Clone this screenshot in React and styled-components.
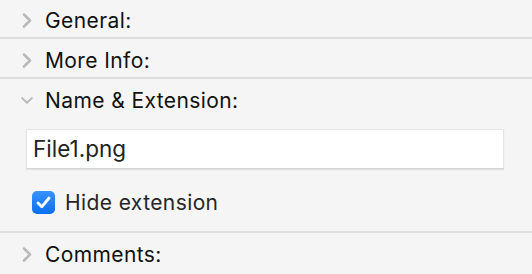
import React, { useState } from "react";
import styled, { createGlobalStyle } from "styled-components";

const GlobalStyle = createGlobalStyle`
  html, body {
    margin: 0;
    padding: 0;
    background: #f5f5f5;
  }
  body {
    font-family: Inter, "Liberation Sans", Arial, sans-serif;
    color: #111;
    -webkit-font-smoothing: antialiased;
  }
`;

const Panel = styled.div`
  width: 532px;
  margin-top: -1px;
  display: flex;
  flex-direction: column;
`;

const Section = styled.section`
  border-bottom: ${(p) => (p.$last ? "none" : "2px solid #dedede")};
`;

const Header = styled.div`
  height: 38px;
  display: flex;
  align-items: center;
  padding: 4px 0 0 21px;
  box-sizing: border-box;
  gap: 12px;
  font-size: 21px;
  letter-spacing: 0.4px;
  cursor: default;
`;

const Chevron = styled.span`
  width: 12px;
  height: 15px;
  display: flex;
  align-items: center;
  justify-content: center;
  svg {
    display: block;
  }
`;

const Body = styled.div`
  padding: 12px 28px 16px 26px;
  display: flex;
  flex-direction: column;
  gap: 21px;
`;

const NameField = styled.input`
  box-sizing: border-box;
  width: 478px;
  height: 40px;
  border: 1px solid #e4e4e4;
  border-bottom-color: #d6d6d6;
  box-shadow: 0 1px 1px rgba(0, 0, 0, 0.08);
  background: #fff;
  padding: 0 0 1px 6px;
  font-family: inherit;
  font-size: 22.5px;
  color: #222;
  outline: none;
`;

const CheckRow = styled.label`
  display: flex;
  align-items: center;
  gap: 10px;
  padding-left: 6px;
  font-size: 21px;
  letter-spacing: 0.4px;
  color: #262626;
`;

const Box = styled.span`
  width: 23px;
  height: 23px;
  border-radius: 5px;
  box-sizing: border-box;
  display: flex;
  align-items: center;
  justify-content: center;
  background: ${(p) =>
    p.$on ? "linear-gradient(#3a93ff, #0a6ff2)" : "#fff"};
  border: ${(p) => (p.$on ? "none" : "1px solid #c8c8c8")};
`;

const ChevronIcon = ({ open }) =>
  open ? (
    <svg width="15" height="9" viewBox="0 0 15 9">
      <path
        d="M1.5 1.5 L7.5 7.2 L13.5 1.5"
        fill="none"
        stroke="#b9b9b9"
        strokeWidth="2.5"
        strokeLinecap="round"
        strokeLinejoin="round"
      />
    </svg>
  ) : (
    <svg width="10" height="15" viewBox="0 0 10 15">
      <path
        d="M2 1.5 L8 7.5 L2 13.5"
        fill="none"
        stroke="#b9b9b9"
        strokeWidth="2.5"
        strokeLinecap="round"
        strokeLinejoin="round"
      />
    </svg>
  );

const Disclosure = ({ title, open, last, children }) => (
  <Section $last={last}>
    <Header>
      <Chevron>
        <ChevronIcon open={open} />
      </Chevron>
      {title}
    </Header>
    {open && children}
  </Section>
);

const App = () => {
  const [name, setName] = useState("File1.png");
  const [hide, setHide] = useState(true);

  return (
    <>
      <GlobalStyle />
      <Panel>
        <Disclosure title="General:" />
        <Disclosure title="More Info:" />
        <Disclosure title="Name & Extension:" open>
          <Body>
            <NameField value={name} onChange={(e) => setName(e.target.value)} />
            <CheckRow onClick={() => setHide(!hide)}>
              <Box $on={hide}>
                {hide && (
                  <svg width="15" height="13" viewBox="0 0 15 13">
                    <path
                      d="M2 7 L5.8 10.8 L13 2"
                      fill="none"
                      stroke="#fff"
                      strokeWidth="2.8"
                      strokeLinecap="round"
                      strokeLinejoin="round"
                    />
                  </svg>
                )}
              </Box>
              Hide extension
            </CheckRow>
          </Body>
        </Disclosure>
        <Disclosure title="Comments:" last />
      </Panel>
    </>
  );
};

export default App;
